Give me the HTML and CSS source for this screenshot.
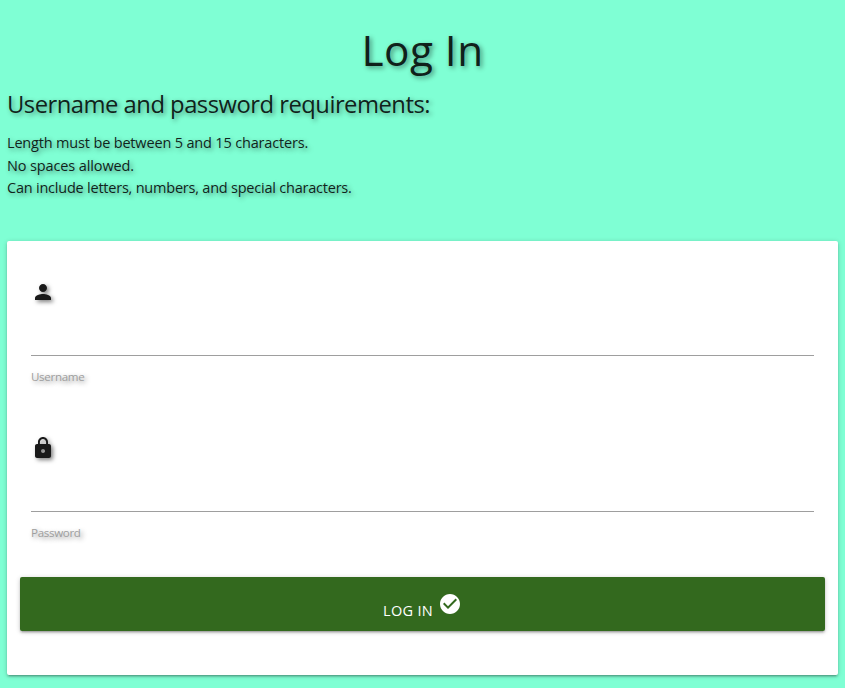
FILE: index.html
```html
<!DOCTYPE html>
<html lang="en">
<head>
<meta charset="utf-8">
<title>Log In</title>
<link rel="stylesheet" href="styles.css">
</head>
<body>
<main class="page">
  <h3 class="title">Log In</h3>
  <h5 class="subtitle">Username and password requirements:</h5>
  <div class="rules">
    <div class="length">Length must be between 5 and 15 characters.</div>
    <div class="spaces">No spaces allowed.</div>
    <div class="characters">Can include letters, numbers, and special characters.</div>
  </div>
  <form class="card">
    <div class="field">
      <svg class="icon" viewBox="0 0 24 24"><path d="M12 12c2.21 0 4-1.79 4-4s-1.79-4-4-4-4 1.79-4 4 1.79 4 4 4zm0 2c-2.67 0-8 1.34-8 4v2h16v-2c0-2.66-5.33-4-8-4z"/></svg>
      <input id="username" class="input" type="text">
      <label class="label" for="username">Username</label>
    </div>
    <div class="field">
      <svg class="icon" viewBox="0 0 24 24"><path d="M18 8h-1V6c0-2.76-2.24-5-5-5S7 3.24 7 6v2H6c-1.1 0-2 .9-2 2v10c0 1.1.9 2 2 2h12c1.1 0 2-.9 2-2V10c0-1.1-.9-2-2-2zm-6 9c-1.1 0-2-.9-2-2s.9-2 2-2 2 .9 2 2-.9 2-2 2zm3.1-9H8.900V6c0-1.710 1.390-3.100 3.100-3.100s3.100 1.390 3.100 3.100v2z"/></svg>
      <input id="password" class="input" type="password">
      <label class="label" for="password">Password</label>
    </div>
    <button class="button" type="button"><span>LOG IN</span><svg class="check" viewBox="0 0 24 24"><path d="M12 2C6.480 2 2 6.480 2 12s4.480 10 10 10 10-4.480 10-10S17.520 2 12 2zm-2 15l-5-5 1.410-1.410L10 14.170l7.590-7.590L19 8l-9 9z"/></svg></button>
  </form>
</main>
</body>
</html>
```
FILE: styles.css
```css
* { box-sizing: border-box; }
body {
  margin: 0;
  min-height: 688px;
  overflow: hidden;
  background: #7fffd4;
  color: rgba(0, 0, 0, 0.87);
  font-family: "Segoe UI", "Open Sans", "Noto Sans", sans-serif;
  font-size: 14.5px;
  line-height: 22.5px;
  text-shadow: 2px 2px 5px rgba(0, 0, 0, 0.45);
}
.page { padding: 26px 7px 0; }
.title {
  margin: 0;
  height: 47px;
  line-height: 47px;
  font-size: 42.3px;
  font-weight: 400;
  text-align: center;
  letter-spacing: 0.5px;
}
.subtitle {
  margin: 18px 0 0;
  height: 26px;
  line-height: 26px;
  font-size: 23.8px;
  font-weight: 400;
  letter-spacing: -0.51px;
}
.rules { margin-top: 15px; white-space: nowrap; }
.length { letter-spacing: -0.17px; }
.spaces { letter-spacing: -0.12px; }
.characters { letter-spacing: -0.22px; }
.card {
  height: 434px;
  margin-top: 41.5px;
  padding: 39px 13px 0;
  background: #fff;
  border-radius: 2px;
  box-shadow: 0 2px 2px 0 rgba(0,0,0,.14), 0 3px 1px -2px rgba(0,0,0,.12), 0 1px 5px 0 rgba(0,0,0,.2);
}
.field { height: 156px; padding: 0 11px; }
.icon {
  display: block;
  width: 24px;
  height: 24px;
  fill: #1a1a1a;
  overflow: visible;
  filter: drop-shadow(2px 2px 2px rgba(0, 0, 0, 0.5));
}
.input {
  display: block;
  width: 100%;
  height: 43px;
  margin: 9px 0 0;
  padding: 0;
  border: 0;
  border-bottom: 1px solid #9e9e9e;
  background: transparent;
  outline: 0;
}
.label {
  display: block;
  width: max-content;
  margin-top: 10px;
  color: #9e9e9e;
  font-size: 11.6px;
  letter-spacing: -0.33px;
}
.button {
  display: flex;
  width: 100%;
  height: 54px;
  margin-top: -15px;
  padding: 0;
  justify-content: center;
  align-items: flex-start;
  gap: 5px;
  border: 0;
  border-radius: 2px;
  background: #33691e;
  color: #fff;
  font: 14.5px/20px "Segoe UI", "Open Sans", "Noto Sans", sans-serif;
  letter-spacing: 0.3px;
  box-shadow: 0 2px 2px 0 rgba(0,0,0,.14), 0 3px 1px -2px rgba(0,0,0,.12), 0 1px 5px 0 rgba(0,0,0,.2);
}
.button span { margin-top: 24px; }
.check { width: 24px; height: 24px; margin-top: 15px; fill: #fff; }
```
